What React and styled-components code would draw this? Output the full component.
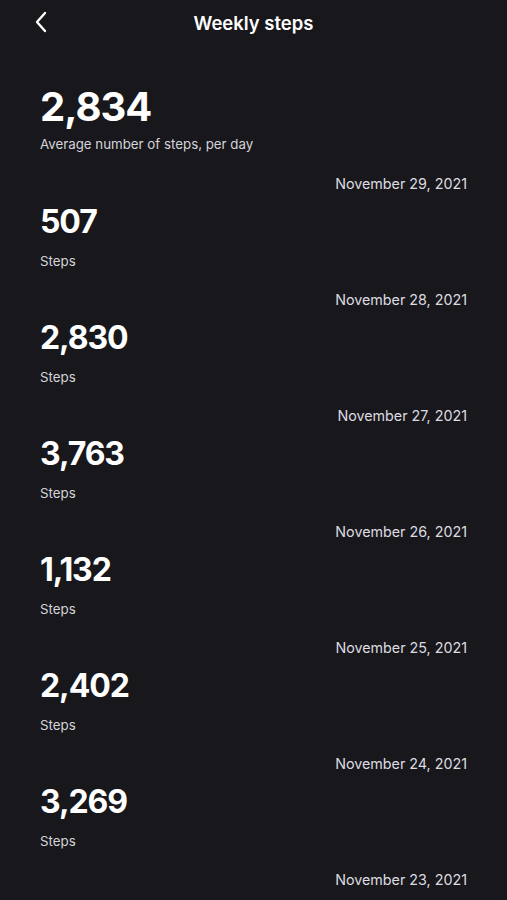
import styled, { createGlobalStyle } from "styled-components";

const GlobalStyle = createGlobalStyle`
    body {
        margin: 0;
        background-color: #18171c;
        font-family: Inter, "Noto Sans", sans-serif;
        -webkit-font-smoothing: antialiased;
    }
`

// last day only peeks in at the bottom of the screen
const days = [
    { date: "November 29, 2021", steps: "507" },
    { date: "November 28, 2021", steps: "2,830" },
    { date: "November 27, 2021", steps: "3,763" },
    { date: "November 26, 2021", steps: "1,132" },
    { date: "November 25, 2021", steps: "2,402" },
    { date: "November 24, 2021", steps: "3,269" },
    { date: "November 23, 2021" },
]

export default function App() {
    return (
        <>
            <GlobalStyle />
            <Screen>
                <Header>
                    <BackButton aria-label="Back">
                        <svg width="14" height="22" viewBox="0 0 14 22" fill="none">
                            <path d="M11 2L3 11L11 20" stroke="#ffffff" strokeWidth="2.4" strokeLinecap="round" strokeLinejoin="round" />
                        </svg>
                    </BackButton>
                    <Title>Weekly steps</Title>
                </Header>
                <Hero>
                    <BigNumber>2,834</BigNumber>
                    <Caption>Average number of steps, per day</Caption>
                </Hero>
                <List>
                    {days.map((day) => (
                        <Day key={day.date}>
                            <DateLabel>{day.date}</DateLabel>
                            {day.steps && (
                                <>
                                    <DayNumber>{day.steps}</DayNumber>
                                    <Caption>Steps</Caption>
                                </>
                            )}
                        </Day>
                    ))}
                </List>
            </Screen>
        </>
    )
}

const Screen = styled.div`
    height: 900px;
    overflow: hidden;
    background-color: #18171c;
    color: #ffffff;
    padding: 0 40px;
`

const Header = styled.header`
    position: relative;
    height: 44px;
    display: flex;
    align-items: center;
    justify-content: center;
`

const BackButton = styled.button`
    position: absolute;
    left: -6px;
    top: 11px;
    border: none;
    background: transparent;
    padding: 0;
    display: flex;
    cursor: pointer;
`

const Title = styled.h1`
    margin: 0;
    padding-top: 2px;
    font-size: 18.5px;
    font-weight: 600;
    line-height: 44px;
`

const Hero = styled.section`
    margin-top: 39px;
    display: flex;
    flex-direction: column;
    gap: 5px;
`

const BigNumber = styled.div`
    font-size: 40px;
    font-weight: 700;
    line-height: 48px;
    letter-spacing: -1px;
`

const Caption = styled.div`
    font-size: 13.3px;
    line-height: 16px;
    color: #d4d4d8;
`

const List = styled.div`
    margin-top: 23px;
    display: flex;
    flex-direction: column;
    gap: 22px;
`

const Day = styled.div`
    display: flex;
    flex-direction: column;
`

const DateLabel = styled.div`
    align-self: flex-end;
    font-size: 14.3px;
    line-height: 18px;
    color: #dcdce0;
    margin-bottom: 10px;
`

const DayNumber = styled.div`
    font-size: 32px;
    font-weight: 700;
    line-height: 38px;
    letter-spacing: -1.1px;
    margin-bottom: 12px;
`
